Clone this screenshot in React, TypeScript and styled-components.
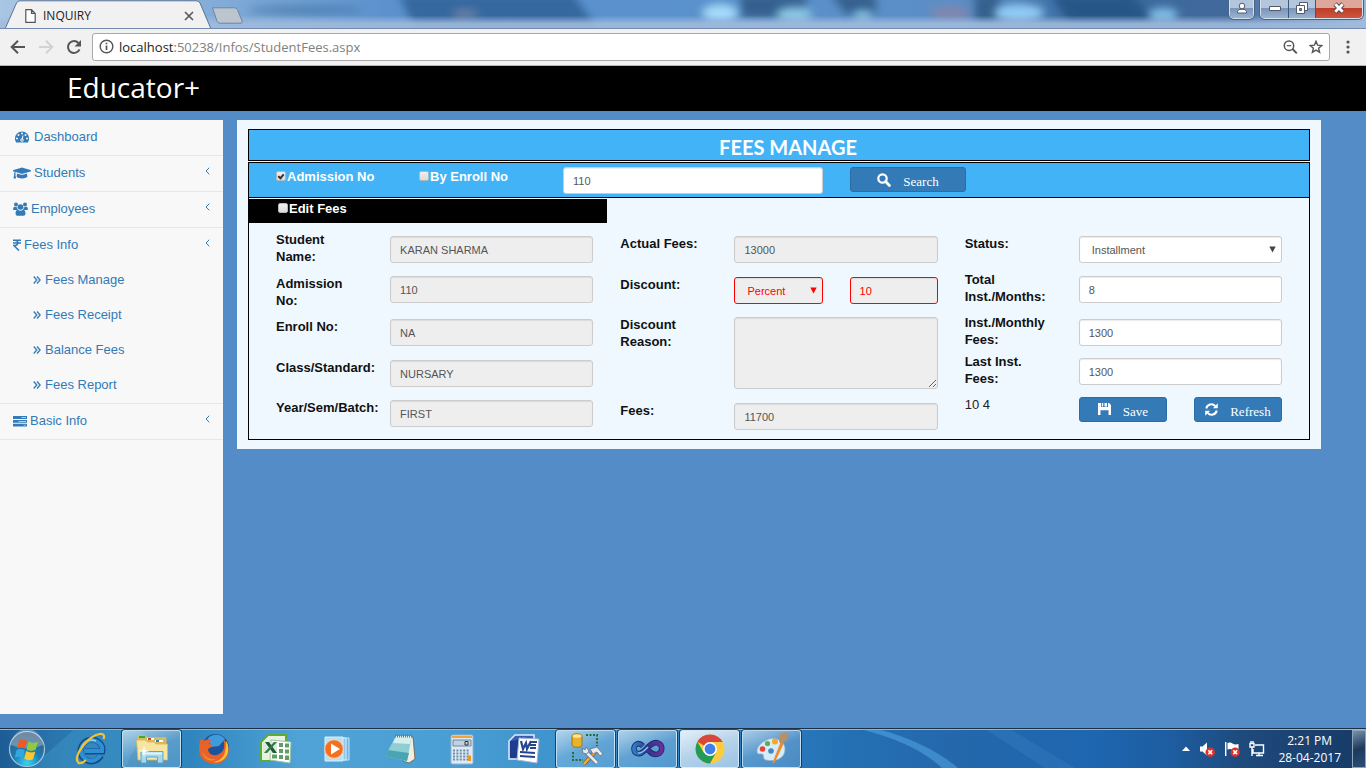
import React, { useId, useState } from "react";
import styled, { createGlobalStyle, css } from "styled-components";
import { FaGraduationCap } from "react-icons/fa";

const GlobalStyle = createGlobalStyle`
  * { box-sizing: border-box; }
  body { margin: 0; }
`;

const uiFont = `"Open Sans", "Noto Sans", sans-serif`;
const bodyFont = `"Liberation Sans", Arial, sans-serif`;
const displayFont = `Lato, "Open Sans", sans-serif`;

const Screen = styled.div`
  min-height: 100vh;
  display: flex;
  flex-direction: column;
  background: #548cc7;
  font-family: ${bodyFont};
  font-size: 13px;
`;

/* ---------- browser frame ---------- */

const TitleBar = styled.div`
  position: relative;
  height: 29px;
  display: flex;
  align-items: flex-start;
  overflow: hidden;
  background: #5d8dc4;
  border-bottom: 1px solid #7289b0;
`;

const Backdrop = styled.svg`
  position: absolute;
  inset: 0;
  width: 100%;
  height: 100%;
`;

const Tab = styled.div`
  position: relative;
  width: 206px;
  height: 29px;
  margin-left: 5px;
  padding: 2px 16px 0 20px;
  display: flex;
  align-items: center;
  gap: 7px;
  font: 12px/24px ${uiFont};
  color: #222;
`;

const TabShape = styled.svg`
  position: absolute;
  left: 0;
  top: 0;
`;

const TabTitle = styled.span`
  position: relative;
  flex: 1;
`;

const PlainButton = styled.button`
  position: relative;
  display: flex;
  align-items: center;
  justify-content: center;
  padding: 0;
  border: 0;
  background: none;
`;

const NewTab = styled(PlainButton)`
  margin-top: 7px;
`;

const WindowControls = styled.div`
  position: relative;
  display: flex;
  gap: 6px;
  margin-left: auto;
  margin-right: 3px;
`;

const ControlGroup = styled.div`
  display: flex;
  height: 19px;
  border: 1px solid #d3e0ee;
  border-top: 0;
  border-radius: 0 0 5px 5px;
  box-shadow: 0 0 0 1px #4a6488;
  overflow: hidden;
`;

const WindowButton = styled(PlainButton)<{ $width: number; $close?: boolean }>`
  width: ${(p) => p.$width}px;
  height: 18px;
  padding-bottom: 2px;
  border-right: 1px solid #3f5878;
  background: ${(p) =>
    p.$close
      ? "linear-gradient(#dfa79c 0 44%, #bd3d28 45%, #d0543c)"
      : "linear-gradient(#b4c6dc 0 44%, #7894b8 45%, #9cb3d0)"};
  &:last-child { border-right: 0; }
`;

const Toolbar = styled.div`
  height: 37px;
  display: flex;
  align-items: center;
  padding: 0 8px 1px 10px;
  background: #f2f1f2;
  border-bottom: 1px solid #b6b4b6;
`;

const NavButtons = styled.div`
  display: flex;
  gap: 12px;
  margin-right: 10px;
`;

const AddressBar = styled.div`
  flex: 1;
  height: 28px;
  display: flex;
  align-items: center;
  gap: 5px;
  padding: 0 6px;
  background: #fff;
  border: 1px solid #a9a7a9;
  border-radius: 3px;
`;

const Address = styled.span`
  flex: 1;
  font: 13px/20px ${uiFont};
  color: #808080;
  b { font-weight: 400; color: #222; }
`;

const BarIcons = styled.div`
  display: flex;
  gap: 11px;
`;

const MenuButton = styled(PlainButton)`
  width: 20px;
  height: 20px;
  margin-left: 8px;
`;

/* ---------- site ---------- */

const SiteHeader = styled.header`
  height: 45px;
  padding-left: 67px;
  background: #000;
  color: #fff;
  font: 28px/42px ${uiFont};
`;

const Site = styled.div`
  flex: 1;
  display: flex;
  align-items: flex-start;
  gap: 14px;
  padding: 9px 45px 14px 0;
`;

const Sidebar = styled.nav`
  align-self: stretch;
  width: 223px;
  background: #f8f8f8;
`;

const Menu = styled.ul`
  margin: 0;
  padding: 0;
  list-style: none;
`;

const MenuEntry = styled.li`
  border-bottom: 1px solid #e7e7e7;
`;

const MenuLink = styled.a<{ $sub?: boolean }>`
  display: flex;
  align-items: center;
  gap: ${(p) => (p.$sub ? 4 : 3)}px;
  height: 35px;
  padding: 0 13px 2px ${(p) => (p.$sub ? 33 : 13)}px;
  color: #337ab7;
  line-height: 18px;
  text-decoration: none;
`;

const Chevron = styled.svg`
  margin: 0 0 3px auto;
`;

const Panel = styled.main`
  flex: 1;
  min-width: 0;
  padding: 9px 11px;
  background: #f0f8ff;
`;

const PanelTitle = styled.h1`
  margin: 0 0 1px;
  height: 32px;
  padding-left: 18px;
  border: 1px solid #000;
  background: #42b3f7;
  color: #fff;
  text-align: center;
  font: 20px/34px ${displayFont};
  font-weight: 700;
`;

const SearchRow = styled.div`
  display: grid;
  grid-template-columns: 116fr 117fr 260fr 116fr 289fr;
  column-gap: 27px;
  align-items: start;
  height: 36px;
  padding: 4px 27px;
  border: 1px solid #000;
  background: #42b3f7;
`;

const CheckLabel = styled.label`
  display: flex;
  align-items: center;
  gap: 1px;
  color: #fff;
  font-weight: 700;
  line-height: 20px;
  white-space: nowrap;
`;

const Tick = styled.input`
  appearance: none;
  display: grid;
  place-content: center;
  width: 10px;
  height: 10px;
  margin: 0 0 2px;
  border: 1px solid #b8b8b8;
  border-radius: 2px;
  background: linear-gradient(#eee, #dcdcdc);
  &:checked::after {
    content: "";
    width: 2px;
    height: 4px;
    margin-bottom: 1px;
    border: solid #333;
    border-width: 0 2px 2px 0;
    transform: rotate(40deg);
  }
`;

const FormBody = styled.div`
  padding: 1px 0 9px;
  border: 1px solid #000;
  border-top: 0;
`;

const EditStrip = styled.div`
  width: calc(34% - 2px);
  height: 24px;
  padding: 0 29px;
  background: #000;
`;

const Groups = styled.div`
  display: grid;
  grid-template-columns: repeat(3, minmax(0, 1fr));
  column-gap: 27px;
  padding: 8px 27px 0;
`;

const Group = styled.div<{ $lowered?: boolean }>`
  padding-top: ${(p) => (p.$lowered ? 4 : 0)}px;
`;

const Field = styled.div<{ $height: number; $raised?: boolean }>`
  display: grid;
  grid-template-columns: minmax(0, 87fr) minmax(0, 203fr);
  column-gap: 27px;
  align-items: start;
  min-height: ${(p) => p.$height}px;
  > :last-child { margin-top: ${(p) => (p.$raised ? 5 : 1)}px; }
`;

const FieldLabel = styled.label`
  color: #111;
  font-weight: 700;
  line-height: 17px;
  white-space: pre;
`;

const Note = styled.span`
  color: #222;
  line-height: 17px;
`;

const control = css<{ $alert?: boolean }>`
  display: block;
  width: 100%;
  min-width: 0;
  margin: 0;
  border: 1px solid ${(p) => (p.$alert ? "#f00" : "#ccc")};
  border-radius: 3px;
  background: #fff;
  color: ${(p) => (p.$alert ? "#f00" : "#555")};
  font: 11px/16px ${bodyFont};
  box-shadow: inset 0 1px 1px rgba(0, 0, 0, 0.08);
  &:disabled { background: #eee; opacity: 1; }
`;

const TextBox = styled.input<{ $alert?: boolean }>`
  ${control}
  height: 27px;
  padding: 1px 9px 0;
`;

const Area = styled.textarea`
  ${control}
  height: 72px;
  padding: 5px 9px;
  resize: both;
`;

const SelectWrap = styled.div`
  position: relative;
`;

const Select = styled.select<{ $alert?: boolean }>`
  ${control}
  appearance: none;
  height: 27px;
  padding: 0 12px;
`;

const SelectArrow = styled.svg`
  position: absolute;
  right: 6px;
  top: 10px;
  pointer-events: none;
`;

const Pair = styled.div`
  display: grid;
  grid-template-columns: 1fr 1fr;
  column-gap: 27px;
`;

const ActionButton = styled.button`
  display: flex;
  align-items: flex-start;
  justify-content: center;
  gap: 12px;
  width: 100%;
  height: 25px;
  padding: 5px 0 0;
  border: 1px solid #2e6da4;
  border-radius: 3px;
  background: #337ab7;
  color: #fff;
  font: 13px/18px "Liberation Serif", "Times New Roman", serif;
`;

/* ---------- taskbar ---------- */

const Taskbar = styled.footer`
  position: relative;
  height: 40px;
  display: flex;
  align-items: center;
  overflow: hidden;
  border-top: 1px solid #1b3044;
  box-shadow: inset 0 1px 0 #8db9dc;
  background: linear-gradient(90deg, #1d5c94 0, #2a75ad 4%, #2f86bf 14%, #50a3d6 22%, #4a9fd4 32%, #3d92cd 42%, #2f80c2 54%, #2470b4 62%, #2468ab 70%, #1e66b0 80%, #1d5c9f 86%, #1e4a7c 91%, #163a66 100%);
`;

const TaskList = styled.div`
  position: relative;
  display: flex;
  gap: 3px;
`;

const StartButton = styled(PlainButton)`
  width: 54px;
  height: 39px;
  margin-right: 6px;
`;

const TaskButton = styled(PlainButton)<{ $state?: "open" | "active" }>`
  width: 59px;
  height: 38px;
  border: 1px solid transparent;
  border-radius: 3px;
  ${(p) =>
    p.$state &&
    css`
      border-color: rgba(220, 240, 255, 0.75);
      box-shadow: 0 0 0 1px rgba(10, 40, 70, 0.75);
      background: ${p.$state === "active"
        ? "linear-gradient(160deg, #e4eff8, #b4d2ea 50%, #9cc3e4)"
        : "linear-gradient(160deg, rgba(255,255,255,.6), rgba(255,255,255,.2) 50%, rgba(255,255,255,.15))"};
    `}
`;

const Tray = styled.div`
  position: relative;
  display: flex;
  align-items: center;
  gap: 9px;
  height: 100%;
  margin-left: auto;
`;

const Clock = styled.div`
  margin: 0 2px 0 4px;
  color: #fff;
  text-align: center;
  font: 12px/17px ${uiFont};
`;

const ShowDesktop = styled.button`
  width: 14px;
  height: 38px;
  padding: 0;
  border: 1px solid #8ea4bd;
  background: linear-gradient(160deg, #7890aa, #1d3a5c 50%, #2b4d76);
`;

/* ---------- icons ---------- */

const GaugeIcon = () => (
  <svg width="18" height="14" viewBox="0 0 18 14">
    <path d="M2 8.500a7 7 0 0 1 14 0c0 1.600-.4 2.800-1.200 4H3.200C2.400 11.300 2 10.100 2 8.500z" fill="#337ab7" />
    <g fill="#f8f8f8">
      <circle cx="4" cy="8.500" r="1" /><circle cx="5.500" cy="5" r="1" /><circle cx="9" cy="3.500" r="1" />
      <circle cx="12.500" cy="5" r="1" /><circle cx="14" cy="8.500" r="1" /><circle cx="9" cy="10" r="1.700" />
    </g>
    <path d="M9 10l1-4.500" stroke="#f8f8f8" strokeWidth="1.100" />
    <circle cx="9" cy="10" r=".7" fill="#337ab7" />
  </svg>
);

const PeopleIcon = () => (
  <svg width="15" height="14" viewBox="0 0 15 14" fill="#337ab7">
    <circle cx="3" cy="2.600" r="2" /><circle cx="12" cy="2.600" r="2" />
    <path d="M.2 8V6.600Q.2 4.800 1.600 4.800q1.600.8 2.700.2Q4 7 5 7.900L4.500 8zM14.800 8V6.600q0-1.800-1.400-1.800-1.600.8-2.700.2.300 2-.7 2.900l.5.100z" />
    <circle cx="7.500" cy="5" r="2.800" />
    <path d="M2.500 11.600q0-3.600 2.600-3.800Q7.500 9.600 9.900 7.800q2.600.2 2.600 3.800 0 2.200-2 2.200h-6q-2 0-2-2.200z" />
  </svg>
);

const RupeeIcon = () => (
  <svg width="8" height="12" viewBox="0 0 8 12" fill="none" stroke="#337ab7" strokeWidth="1.500">
    <path d="M0 1.200h8M0 3.900h8M.5 1.200H2C5.700 1.200 5.700 6.500 2 6.500H.8L6 11.600" />
  </svg>
);

const TasksIcon = () => (
  <svg width="14" height="12" viewBox="0 0 14 12">
    <path d="M0 1h14v3H0zM0 5h14v2.800H0zM0 8.800h14v2.700H0z" fill="#337ab7" />
    <path d="M8.500 2H13v1H8.500zM5.500 5.900H13v1H5.500zM10.500 9.700H13v.9h-2.500z" fill="#f8f8f8" opacity=".65" />
  </svg>
);

const DoubleAngle = () => (
  <svg width="8" height="10" viewBox="0 0 8 10" fill="none" stroke="#337ab7" strokeWidth="1.300">
    <path d="M.7 1.500L3.800 5 .7 8.500M4 1.500L7.100 5 4 8.500" />
  </svg>
);

const AngleLeft = () => (
  <Chevron width="5" height="8" viewBox="0 0 5 8" fill="none" stroke="#337ab7">
    <path d="M4.300.7L1 4l3.300 3.300" />
  </Chevron>
);

const SearchGlyph = () => (
  <svg width="14" height="14" viewBox="0 0 14 14" fill="none" stroke="#fff">
    <circle cx="5.500" cy="5.500" r="4.200" strokeWidth="2.200" />
    <path d="M8.600 8.600l3.800 3.800" strokeWidth="2.800" strokeLinecap="round" />
  </svg>
);

const SaveGlyph = () => (
  <svg width="13" height="12" viewBox="0 0 13 12" fill="#fff">
    <path d="M0 0h3v4.500h7V0h1l2 2v10h-2.500V7h-8v5H0z" />
    <path d="M6.500 0H9v3.500H6.500zM2.500 4h8v3.200h-8z" />
    <path d="M3.800 0h1.400v3.500H3.800z" />
  </svg>
);

const RefreshGlyph = () => (
  <svg width="13" height="13" viewBox="0 0 13 13" fill="none" stroke="#fff" strokeWidth="2">
    <path d="M1.300 5.500C2 1.200 7.500-.2 10.300 3.200M11.700 7.500C11 11.800 5.500 13.200 2.700 9.800" />
    <path d="M12.800.3v5H7.900zM.2 12.700v-5h4.900z" fill="#fff" stroke="none" />
  </svg>
);

const TitleBackdrop = () => (
  <Backdrop viewBox="0 0 1366 28" preserveAspectRatio="none" aria-hidden="true">
    <defs>
      <filter id="soft" x="-20%" y="-100%" width="140%" height="300%"><feGaussianBlur stdDeviation="4" /></filter>
      <linearGradient id="sky">
        <stop offset="0" stopColor="#a9c6e4" /><stop offset=".16" stopColor="#82acd8" />
        <stop offset=".28" stopColor="#5c91cd" /><stop offset=".5" stopColor="#5a92cd" />
        <stop offset=".7" stopColor="#5b8ec5" /><stop offset=".8" stopColor="#39699f" />
        <stop offset=".9" stopColor="#42699c" /><stop offset="1" stopColor="#9bb6d4" />
      </linearGradient>
      <linearGradient id="rim" x2="0" y2="1">
        <stop offset=".55" stopColor="#a5bfe0" stopOpacity="0" /><stop offset=".85" stopColor="#a0bbdc" stopOpacity=".9" />
      </linearGradient>
    </defs>
    <rect width="1366" height="28" fill="url(#sky)" />
    <g filter="url(#soft)">
      <path d="M398-6h175l28 40H418z" fill="#34689f" />
      <path d="M740-6h70l-12 24h-56zM830-6h46v20h-30zM975-6h25v30h-25z" fill="#34618e" />
      <path d="M1050-6h80l30 30h-90z" fill="#285788" />
      <ellipse cx="305" cy="10" rx="58" ry="4" fill="#4473a4" opacity=".7" />
      <ellipse cx="465" cy="14" rx="13" ry="4" fill="#6c83a8" />
      <ellipse cx="950" cy="13" rx="20" ry="7" fill="#8286ae" />
    </g>
    <g filter="url(#soft)" fill="#a5dbfa">
      <ellipse cx="720" cy="13" rx="18" ry="9" /><ellipse cx="794" cy="15" rx="18" ry="8" fill="#8cc8e4" />
      <ellipse cx="863" cy="16" rx="10" ry="6" fill="#82bedd" /><ellipse cx="1019" cy="13" rx="25" ry="9" fill="#91cbf4" />
      <ellipse cx="1163" cy="15" rx="15" ry="7" fill="#82bfe9" />
    </g>
    <rect width="1366" height="28" fill="url(#rim)" />
  </Backdrop>
);

const WindowsOrb = () => (
  <svg width="38" height="38" viewBox="0 0 38 38">
    <defs>
      <radialGradient id="orb" cx=".5" cy=".9" r=".8">
        <stop offset="0" stopColor="#35d5f5" /><stop offset=".5" stopColor="#1c7ab4" /><stop offset="1" stopColor="#3b5f80" />
      </radialGradient>
    </defs>
    <circle cx="19" cy="19" r="17.500" fill="url(#orb)" stroke="#a4c6dc" strokeWidth="1.200" />
    <path d="M3 15a16 16 0 0 1 32 0c-10 4-22 4-32 0z" fill="#fff" opacity=".28" />
    <path d="M11 10.500c3-1.600 5.500-1.300 8 .3l-2 8c-2.600-1.600-5-1.700-8-.3z" fill="#ee5a24" />
    <path d="M20.500 11.500c3 1.700 6 1.900 9.500.3l-2.300 8c-3.200 1.600-6.200 1.400-9.100-.3z" fill="#94c83d" />
    <path d="M8.600 20c3-1.500 5.500-1.300 8 .3l-2 7.700c-2.600-1.600-5-1.700-8-.3z" fill="#33a7e2" />
    <path d="M18.200 21c3 1.700 6 1.900 9.100.4l-2.200 7.800c-3.200 1.600-6 1.400-8.900-.4z" fill="#fdc72b" />
  </svg>
);

const IeIcon = () => (
  <svg width="34" height="34" viewBox="0 0 34 34" fill="none">
    <path d="M28 23.500C25 29 18.500 31 13 28S6 19 9 13.500 19 6 24 9s6 7 5.300 10.500H12" stroke="#134c83" strokeWidth="6" />
    <path d="M27.500 23C24.500 28 18.500 30.300 13.500 27.500S6.500 19 9.500 13.800 19 6.800 24 9.500s5.500 6 5 9.500H12" stroke="#2d8fd6" strokeWidth="4.200" />
    <path d="M9 15c2-6 9-8.500 14-6" stroke="#8fd2f5" strokeWidth="1.600" />
    <path d="M6 31C-2 26 15 3 27 2c4-.3 5 2 3.500 5" stroke="#f5c331" strokeWidth="2.200" />
    <path d="M5 31c3 1 6-1 8-3" stroke="#f5c331" strokeWidth="2" />
  </svg>
);

const FolderIcon = () => (
  <svg width="34" height="32" viewBox="0 0 34 32">
    <path d="M2 4q0-2 2-2h6l2 2h18q1.500 0 1.500 1.500V27H3z" fill="#d9b95c" />
    <path d="M4 3h6v2H4z" fill="#2fae3c" /><path d="M12 5h7v2h-7z" fill="#fff" /><path d="M13 5h3v2h-3z" fill="#d8402c" />
    <path d="M20 7h8v2h-8z" fill="#fff" /><path d="M21 7h3v2h-3z" fill="#2e7fd2" />
    <path d="M1.500 7h9l2 2h7l1.500 2h11.500V27H3z" fill="#f7e49e" stroke="#d6b65c" strokeWidth=".8" />
    <path d="M6 30V18.500h22V30h-5.500v-6h-11v6z" fill="#a3d8f0" stroke="#61a6cf" />
    <path d="M7 19.500h20v2H7z" fill="#e2f6fd" /><path d="M9 12l1 5 5 1-5 1-1 6-1-6-5-1 5-1z" fill="#fff" />
  </svg>
);

const FirefoxIcon = () => (
  <svg width="32" height="32" viewBox="0 0 32 32">
    <circle cx="17.500" cy="14.500" r="13.500" fill="#1d539c" /><path d="M10 5c4-4 12-5 17 1l-6 7-8 1z" fill="#3f9bdc" />
    <path d="M3 5c1 2 2 2.500 4 2.500C9 6 11 6 13 7l-2 4c2 0 4 1 4 2l-5 3c0 5 6 8 11 5 6-3 6-9 4-15 4 3 6 8 5.500 13C29 28 22 31.500 16 31 6 30 1 24 1 16 1 11 2 8 3 5z" fill="#e6622a" />
    <path d="M28 8c3 4 3 9 1 14-3 6-9 8-14 7 7-1 11-5 12-10 1-4 1-8 1-11z" fill="#fbc02d" />
    <path d="M4 17c2 7 8 10 14 9-5 4-13 1-14-9z" fill="#f58a25" />
  </svg>
);

const ExcelIcon = () => (
  <svg width="34" height="32" viewBox="0 0 34 32">
    <path d="M9 2h18v26H2V9z" fill="#e7f2e1" stroke="#58ad35" strokeWidth="2" />
    <path d="M12 7l20 2-1 21-20-3z" fill="#fff" stroke="#a2bfa2" />
    <path d="M20 10h4v4h-4zM26 10.500h4v4h-4zM20 16h4v4h-4zM26 16.500h4v4h-4zM13 21.500h5v4h-5zM20 22h4v4h-4zM26 22.500h4v4.500h-4z" fill="#5c9f68" />
    <path d="M4 9h14v11H4z" fill="#dcebd8" /><path d="M6 9h4l8 11h-4z" fill="#1e5b35" /><path d="M15 9h3L8 20H5z" fill="#307a48" />
  </svg>
);

const PlayerIcon = () => (
  <svg width="34" height="30" viewBox="0 0 34 30">
    <path d="M14 4h14v22H14z" fill="#6fb8e4" stroke="#c2e3f6" /><path d="M11 4h14v22H11z" fill="#8bc8ea" stroke="#d9effa" />
    <path d="M4 3h18v24H4z" fill="#b8dff3" stroke="#d9effa" />
    <circle cx="13" cy="15" r="9.300" fill="#f36f21" stroke="#ffd3a8" /><path d="M10 9.500l9 5.500-9 5.500z" fill="#fff" />
  </svg>
);

const NotepadIcon = () => (
  <svg width="34" height="32" viewBox="0 0 34 32">
    <path d="M28 4h2l2 22-6 4-6-2z" fill="#f2efe0" stroke="#6e5a3c" strokeWidth=".8" />
    <path d="M13 3h16l-5 25L2 23z" fill="#8fcfd3" /><path d="M13 3h16l-2 8-17-1z" fill="#d6eeee" />
    <path d="M2 23l22 5 2-8L5 17z" fill="#4aa5b2" /><path d="M12 3h17" stroke="#777" strokeWidth="3" strokeDasharray="1 1" />
  </svg>
);

const CalculatorIcon = () => (
  <svg width="24" height="32" viewBox="0 0 24 32">
    <rect x="1" y="2" width="22" height="29" rx="1.500" fill="#dceaf5" stroke="#94b2cc" />
    <path d="M2 3h20v2H2z" fill="#f0a43a" /><path d="M3 7h18v6H3z" fill="#c3d2e0" stroke="#71889e" />
    <path d="M15 8.500h3v3.500h-3z" fill="none" stroke="#334" />
    <path d="M3 17.500h16M3 20.500h16M3 23.500h16M3 26.500h16" stroke="#6f8ca8" strokeWidth="2" strokeDasharray="2 1.400" />
    <path d="M18 22.500h3V28h-3z" fill="#ef9528" />
  </svg>
);

const WordIcon = () => (
  <svg width="34" height="32" viewBox="0 0 34 32">
    <path d="M8 2h19v24H2V8z" fill="#3a5eb5" stroke="#e4ebf7" strokeWidth="1.500" /><path d="M3 8q8 0 12-5l-2 22H3z" fill="#1d3d91" />
    <path d="M12 5l20 1-2 24-20-3z" fill="#fff" stroke="#a6b4cf" />
    <path d="M14 8l2 8 3-6 1 6 4-8" fill="none" stroke="#27458f" strokeWidth="2.200" />
    <path d="M24 9h6M23 12h6M23 15h6M13 19l15 1M13 23l15 1" stroke="#27458f" strokeWidth="1.800" />
  </svg>
);

const DatabaseIcon = () => (
  <svg width="34" height="34" viewBox="0 0 34 34">
    <path d="M3 4c0-3 10-3 10 0v9c0 3-10 3-10 0z" fill="#e7b22d" stroke="#a3750f" /><ellipse cx="8" cy="4" rx="4.500" ry="1.800" fill="#fbe58f" />
    <path d="M17 3h11v11M4 20v8h10" fill="none" stroke="#25702e" strokeWidth="2" strokeDasharray="2 1.500" />
    <path d="M26 20L15 32" stroke="#7c5213" strokeWidth="4" /><path d="M26 20L15 32" stroke="#efaa3a" strokeWidth="2.600" />
    <path d="M15 18l13 13" stroke="#5f6974" strokeWidth="4.200" /><path d="M15 18l13 13" stroke="#e6eaef" strokeWidth="2.800" />
    <path d="M13 16l1 5 4 1 2-3-3-4-1 3z" fill="#e6eaef" stroke="#5f6974" strokeWidth=".7" />
    <path d="M21 17l7-2 6 7-3 2-3-4-4 2z" fill="#e6eaef" stroke="#5f6974" strokeWidth=".7" />
  </svg>
);

const StudioIcon = () => (
  <svg width="34" height="20" viewBox="0 0 34 20" fill="none">
    <defs><linearGradient id="loop"><stop offset="0" stopColor="#2f7cc5" /><stop offset=".5" stopColor="#343390" /><stop offset="1" stopColor="#6b2f9c" /></linearGradient></defs>
    <path d="M12 7C7 2 3 6 3 10s5 7 10 2 9-10 14-8 5 9 0 11-8-2-11-5" stroke="#1b2d68" strokeWidth="5.500" />
    <path d="M12 7C7 2 3 6 3 10s5 7 10 2 9-10 14-8 5 9 0 11-8-2-11-5" stroke="url(#loop)" strokeWidth="3.800" />
    <path d="M7 14c4 1 7-3 10-6" stroke="#83c0f0" strokeWidth="1.500" />
  </svg>
);

const ChromeIcon = () => (
  <svg width="32" height="32" viewBox="0 0 32 32">
    <circle cx="16" cy="16" r="14.500" fill="#fccc3d" />
    <path d="M16 16L3.400 8.800A14.500 14.500 0 0 1 28.600 9H16z" fill="#d9463b" />
    <path d="M3.400 8.800A14.500 14.500 0 0 0 16 30.500l6-11L16 16 9.700 19.600z" fill="#239b56" />
    <circle cx="16" cy="16" r="6.900" fill="#fff" /><circle cx="16" cy="16" r="5.400" fill="#3f7fe8" />
  </svg>
);

const PaintIcon = () => (
  <svg width="34" height="34" viewBox="0 0 34 34">
    <path d="M10 9C18 3 30 8 30 17c0 10-10 13-19 11-4-1-1-5-4-6-3-.5-5 1-5-3 0-4 4-8 8-10z" fill="#d8ebf6" stroke="#8bb4cf" strokeWidth=".7" />
    <circle cx="16" cy="19" r="2.800" fill="#3c8ac9" /><circle cx="7.500" cy="17" r="2.800" fill="#e4453b" />
    <circle cx="12.500" cy="11.500" r="2.600" fill="#57b447" /><circle cx="20" cy="9.500" r="3" fill="#f6a629" />
    <path d="M26 9l3 2-9 19-3 2z" fill="#ee8d2c" /><path d="M25 2l8-2-1 8-5 4-3-2z" fill="#b98f68" />
  </svg>
);

const BadgeCross = () => (
  <>
    <circle cx="11.200" cy="11.200" r="4.700" fill="#d9342b" />
    <path d="M9.300 9.300l3.800 3.800M13.100 9.300l-3.800 3.800" stroke="#fff" strokeWidth="1.600" />
  </>
);

/* ---------- form pieces ---------- */

type TextFieldProps = { label: string; value: string; height: number; raised?: boolean; locked?: boolean };

const TextField = ({ label, value, height, raised, locked }: TextFieldProps) => {
  const id = useId();
  return (
    <Field $height={height} $raised={raised}>
      <FieldLabel htmlFor={id}>{label}</FieldLabel>
      <TextBox id={id} defaultValue={value} disabled={locked} />
    </Field>
  );
};

const DropDown = ({ id, options, alert }: { id: string; options: string[]; alert?: boolean }) => (
  <SelectWrap>
    <Select id={id} $alert={alert} disabled={alert}>
      {options.map((o) => <option key={o}>{o}</option>)}
    </Select>
    <SelectArrow width="7" height="7" viewBox="0 0 7 7">
      <path d="M.3.500h6.400L3.500 6.500z" fill={alert ? "#f00" : "#444"} />
    </SelectArrow>
  </SelectWrap>
);

const feeLinks = ["Fees Manage", "Fees Receipt", "Balance Fees", "Fees Report"];

const tasks: { name: string; icon: React.ReactNode; state?: "open" | "active" }[] = [
  { name: "Internet Explorer", icon: <IeIcon /> },
  { name: "Windows Explorer", icon: <FolderIcon />, state: "open" },
  { name: "Firefox", icon: <FirefoxIcon /> },
  { name: "Excel", icon: <ExcelIcon /> },
  { name: "Media Player", icon: <PlayerIcon /> },
  { name: "Notepad", icon: <NotepadIcon /> },
  { name: "Calculator", icon: <CalculatorIcon /> },
  { name: "Word", icon: <WordIcon /> },
  { name: "SQL Server", icon: <DatabaseIcon />, state: "open" },
  { name: "Visual Studio", icon: <StudioIcon />, state: "open" },
  { name: "Chrome", icon: <ChromeIcon />, state: "active" },
  { name: "Paint", icon: <PaintIcon />, state: "open" },
];

export default function App() {
  const [mode, setMode] = useState<"admission" | "enroll">("admission");

  return (
    <Screen>
      <GlobalStyle />
      <TitleBar>
        <TitleBackdrop />
        <Tab>
          <TabShape width="208" height="29" viewBox="0 0 208 29">
            <path d="M0 29L11.500 3Q12.500.8 15 .8H191Q194 .8 195 3L206 29z" fill="#f2f1f2" stroke="#5d7396" />
          </TabShape>
          <PlainButton as="span">
            <svg width="11" height="14" viewBox="0 0 11 14" fill="#fff" stroke="#555" strokeWidth="1.200">
              <path d="M.8.700h5.700l3.700 3.700v8.900H.8zM6.500.700v3.700h3.700" />
            </svg>
          </PlainButton>
          <TabTitle>INQUIRY</TabTitle>
          <PlainButton aria-label="Close tab">
            <svg width="12" height="12" viewBox="0 0 12 12" stroke="#555" strokeWidth="1.600"><path d="M2 2l8 8M10 2l-8 8" /></svg>
          </PlainButton>
        </Tab>
        <NewTab aria-label="New tab">
          <svg width="33" height="18" viewBox="0 0 33 18">
            <path d="M1.500.8h22q2 0 3 2l4.500 11q1 2.400-1 2.400H9q-2 0-3-2z" fill="#bcc5ce" stroke="#6a84a5" />
          </svg>
        </NewTab>
        <WindowControls>
          <ControlGroup>
            <WindowButton $width={23} aria-label="User">
              <svg width="12" height="12" viewBox="0 0 12 12" fill="#fff" stroke="#535a6b"><path d="M1.500 11V9.300Q2 7.200 6 7.200t4.500 2.100V11z" /><circle cx="6" cy="4" r="2.800" /></svg>
            </WindowButton>
          </ControlGroup>
          <ControlGroup>
            <WindowButton $width={28} aria-label="Minimize">
              <svg width="12" height="6" viewBox="0 0 12 6"><path d="M.5 1.500h11v4H.5z" fill="#fff" stroke="#535a6b" /></svg>
            </WindowButton>
            <WindowButton $width={27} aria-label="Restore">
              <svg width="12" height="12" viewBox="0 0 12 12" fill="#fff" stroke="#535a6b"><path d="M3.500.5h8v8h-8z" /><path d="M.5 3.500h8v8h-8z" /><path d="M3.500 6.500h2v2h-2z" fill="#7894b8" /></svg>
            </WindowButton>
            <WindowButton $width={46} $close aria-label="Close">
              <svg width="14" height="12" viewBox="0 0 14 12"><path d="M3 2l8 8M11 2l-8 8" stroke="#5a4650" strokeWidth="4.600" /><path d="M3.300 2.200l7.400 7.600M10.700 2.200L3.300 9.800" stroke="#fff" strokeWidth="2.800" /></svg>
            </WindowButton>
          </ControlGroup>
        </WindowControls>
      </TitleBar>

      <Toolbar>
        <NavButtons>
          <PlainButton aria-label="Back">
            <svg width="16" height="16" viewBox="0 0 16 16" fill="none" stroke="#555" strokeWidth="2"><path d="M15 8H2M8 1.700L1.700 8 8 14.300" /></svg>
          </PlainButton>
          <PlainButton aria-label="Forward">
            <svg width="16" height="16" viewBox="0 0 16 16" fill="none" stroke="#d2d2d2" strokeWidth="2"><path d="M1 8h13M8 1.700L14.300 8 8 14.300" /></svg>
          </PlainButton>
          <PlainButton aria-label="Reload">
            <svg width="16" height="16" viewBox="0 0 16 16"><path d="M13.500 10.300A6 6 0 1 1 12.500 4" fill="none" stroke="#555" strokeWidth="2" /><path d="M15 1v6.500H8.500z" fill="#555" /></svg>
          </PlainButton>
        </NavButtons>
        <AddressBar>
          <svg width="15" height="15" viewBox="0 0 15 15" fill="none" stroke="#555"><circle cx="7.500" cy="7.500" r="6.300" strokeWidth="1.400" /><path d="M7.500 6.500V11M7.500 3.700v1.600" strokeWidth="1.700" /></svg>
          <Address><b>localhost</b>:50238/Infos/StudentFees.aspx</Address>
          <BarIcons>
            <PlainButton aria-label="Zoom">
              <svg width="15" height="14" viewBox="0 0 15 14" fill="none" stroke="#555"><circle cx="6" cy="5.700" r="4.700" strokeWidth="1.500" /><path d="M3.800 5.700h4.400" strokeWidth="1.200" /><path d="M9.500 9l4.300 4.300" strokeWidth="1.900" /></svg>
            </PlainButton>
            <PlainButton aria-label="Bookmark">
              <svg width="14" height="14" viewBox="0 0 14 14" fill="none" stroke="#555" strokeWidth="1.400"><path d="M7 1.300l1.600 3.900 4.200.3-3.200 2.700 1 4.100L7 10.100l-3.600 2.200 1-4.100-3.200-2.700 4.200-.3z" /></svg>
            </PlainButton>
          </BarIcons>
        </AddressBar>
        <MenuButton aria-label="Menu">
          <svg width="4" height="14" viewBox="0 0 4 14" fill="#555"><circle cx="2" cy="2" r="1.600" /><circle cx="2" cy="7" r="1.600" /><circle cx="2" cy="12" r="1.600" /></svg>
        </MenuButton>
      </Toolbar>

      <SiteHeader>Educator+</SiteHeader>

      <Site>
        <Sidebar>
          <Menu>
            <MenuEntry><MenuLink href="#dashboard"><GaugeIcon />Dashboard</MenuLink></MenuEntry>
            <MenuEntry><MenuLink href="#students"><FaGraduationCap size={18} />Students<AngleLeft /></MenuLink></MenuEntry>
            <MenuEntry><MenuLink href="#employees"><PeopleIcon />Employees<AngleLeft /></MenuLink></MenuEntry>
            <MenuEntry>
              <MenuLink href="#fees"><RupeeIcon />Fees Info<AngleLeft /></MenuLink>
              <Menu>
                {feeLinks.map((name) => (
                  <li key={name}><MenuLink $sub href="#fees"><DoubleAngle />{name}</MenuLink></li>
                ))}
              </Menu>
            </MenuEntry>
            <MenuEntry><MenuLink href="#basic"><TasksIcon />Basic Info<AngleLeft /></MenuLink></MenuEntry>
          </Menu>
        </Sidebar>

        <Panel>
          <PanelTitle>FEES MANAGE</PanelTitle>
          <SearchRow>
            <CheckLabel>
              <Tick type="checkbox" checked={mode === "admission"} onChange={() => setMode("admission")} />Admission No
            </CheckLabel>
            <CheckLabel>
              <Tick type="checkbox" checked={mode === "enroll"} onChange={() => setMode("enroll")} />By Enroll No
            </CheckLabel>
            <TextBox aria-label="Number to search" defaultValue="110" />
            <ActionButton><SearchGlyph />Search</ActionButton>
          </SearchRow>
          <FormBody>
            <EditStrip>
              <CheckLabel><Tick type="checkbox" />Edit Fees</CheckLabel>
            </EditStrip>
            <Groups>
              <Group>
                <TextField label={"Student\nName:"} value="KARAN SHARMA" height={44} raised locked />
                <TextField label={"Admission\nNo:"} value="110" height={43} locked />
                <TextField label="Enroll No:" value="NA" height={41} locked />
                <TextField label="Class/Standard:" value="NURSARY" height={40} locked />
                <TextField label="Year/Sem/Batch:" value="FIRST" height={28} locked />
              </Group>
              <Group $lowered>
                <TextField label="Actual Fees:" value="13000" height={41} locked />
                <Field $height={40}>
                  <FieldLabel htmlFor="discount">Discount:</FieldLabel>
                  <Pair>
                    <DropDown id="discount" options={["Percent", "Amount"]} alert />
                    <TextBox aria-label="Discount value" defaultValue="10" disabled $alert />
                  </Pair>
                </Field>
                <Field $height={86}>
                  <FieldLabel htmlFor="reason">{"Discount\nReason:"}</FieldLabel>
                  <Area id="reason" disabled />
                </Field>
                <TextField label="Fees:" value="11700" height={28} locked />
              </Group>
              <Group $lowered>
                <Field $height={36}>
                  <FieldLabel htmlFor="status">Status:</FieldLabel>
                  <DropDown id="status" options={["Installment", "Full"]} />
                </Field>
                <TextField label={"Total\nInst./Months:"} value="8" height={43} raised />
                <TextField label={"Inst./Monthly\nFees:"} value="1300" height={39} raised />
                <TextField label={"Last Inst.\nFees:"} value="1300" height={43} raised />
                <Field $height={28}>
                  <Note>10 4</Note>
                  <Pair>
                    <ActionButton><SaveGlyph />Save</ActionButton>
                    <ActionButton><RefreshGlyph />Refresh</ActionButton>
                  </Pair>
                </Field>
              </Group>
            </Groups>
          </FormBody>
        </Panel>
      </Site>

      <Taskbar>
        <Backdrop viewBox="0 0 1366 40" preserveAspectRatio="none" aria-hidden="true">
          <path d="M30 40L75 0h70l-20 40z" fill="#4fb2e0" opacity=".25" />
          <path d="M860 0h18q50 14 80 40h-16Q915 14 860 0z" fill="#5fb4ee" opacity=".45" />
          <path d="M985 0l60 40h30L1010 0z" fill="#5fb4ee" opacity=".12" />
        </Backdrop>
        <StartButton aria-label="Start"><WindowsOrb /></StartButton>
        <TaskList>
          {tasks.map((t) => (
            <TaskButton key={t.name} $state={t.state} aria-label={t.name}>{t.icon}</TaskButton>
          ))}
        </TaskList>
        <Tray>
          <svg width="8" height="5" viewBox="0 0 8 5" fill="#fff"><path d="M0 5l4-4.500L8 5z" /></svg>
          <svg width="16" height="16" viewBox="0 0 16 16"><path d="M1 5.500h2.500L8 1.500v13L3.500 10.500H1z" fill="#fff" /><BadgeCross /></svg>
          <svg width="16" height="16" viewBox="0 0 16 16"><path d="M1.700 1v14" stroke="#fff" strokeWidth="1.400" /><path d="M3.500 2q3-1 5 .5t6 .5v6q-4 1-6-.3t-5-.2z" fill="#fff" /><BadgeCross /></svg>
          <svg width="16" height="16" viewBox="0 0 16 16" fill="none" stroke="#fff" strokeWidth="1.400"><path d="M6 4h8.500v8H4V8M7 14.500h7M10 12v2.500M1 2.500h4V6H1zM2 0v2.500M4 0v2.500M3 6v9" /></svg>
          <Clock>2:21 PM<br />28-04-2017</Clock>
          <ShowDesktop aria-label="Show desktop" />
        </Tray>
      </Taskbar>
    </Screen>
  );
}
